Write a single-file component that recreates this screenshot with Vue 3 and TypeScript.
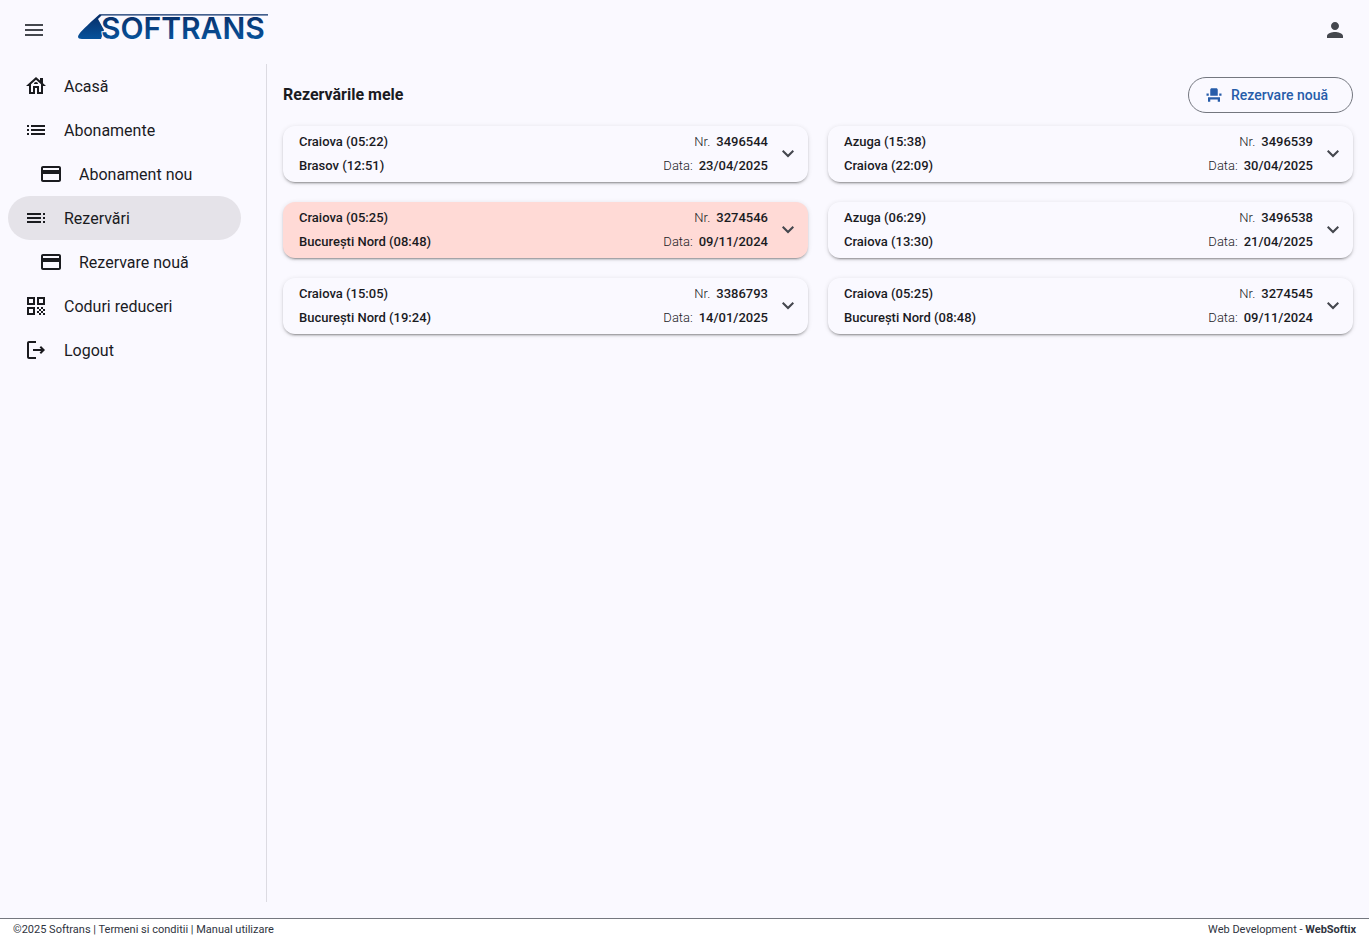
<script setup lang="ts">
interface NavItem {
  label: string
  icon: string
  nested?: boolean
  active?: boolean
}

interface Booking {
  from: string
  to: string
  number: string
  date: string
  cancelled?: boolean
}

const icons: Record<string, string> = {
  menu: 'M3 18h18v-2H3v2zm0-5h18v-2H3v2zm0-7v2h18V6H3z',
  person: 'M12 12c2.21 0 4-1.79 4-4s-1.79-4-4-4-4 1.79-4 4 1.79 4 4 4zm0 2c-2.67 0-8 1.34-8 4v2h16v-2c0-2.66-5.33-4-8-4z',
  house: 'M19 9.3V4h-3v2.6L12 3 2 12h3v8h6v-6h2v6h6v-8h3l-3-2.7zM17 18h-2v-6H9v6H7v-7.81l5-4.5 5 4.5V18zM10 10h4c0-1.1-.9-2-2-2s-2 .9-2 2z',
  list: 'M3 13h2v-2H3v2zm0 4h2v-2H3v2zm0-8h2V7H3v2zm4 4h14v-2H7v2zm0 4h14v-2H7v2zM7 7v2h14V7H7z',
  card: 'M20 4H4c-1.11 0-1.99.89-1.99 2L2 18c0 1.11.89 2 2 2h16c1.11 0 2-.89 2-2V6c0-1.11-.89-2-2-2zm0 14H4v-6h16v6zm0-10H4V6h16v2z',
  toc: 'M3 9h14V7H3v2zm0 4h14v-2H3v2zm0 4h14v-2H3v2zm16 0h2v-2h-2v2zm0-10v2h2V7h-2zm0 6h2v-2h-2v2z',
  qr: 'M3 11h8V3H3v8zm2-6h4v4H5V5zM3 21h8v-8H3v8zm2-6h4v4H5v-4zM13 3v8h8V3h-8zm6 6h-4V5h4v4zM19 19h2v2h-2zM13 13h2v2h-2zM15 15h2v2h-2zM13 17h2v2h-2zM15 19h2v2h-2zM17 17h2v2h-2zM17 13h2v2h-2zM19 15h2v2h-2z',
  logout: 'M17 8l-1.41 1.41L17.17 11H9v2h8.17l-1.58 1.58L17 16l4-4zM5 5h7V3H5c-1.1 0-2 .9-2 2v14c0 1.1.9 2 2 2h7v-2H5V5z',
  seat: 'M4 18v3h3v-3h10v3h3v-6H4v3zm15-8h3v3h-3zM2 10h3v3H2zm15 3H7V5c0-1.1.9-2 2-2h6c1.1 0 2 .9 2 2v8z',
  expand: 'M12 15.4l-6-6L7.4 8l4.6 4.6L16.6 8 18 9.4z',
}

const navItems: NavItem[] = [
  { label: 'Acasă', icon: 'house' },
  { label: 'Abonamente', icon: 'list' },
  { label: 'Abonament nou', icon: 'card', nested: true },
  { label: 'Rezervări', icon: 'toc', active: true },
  { label: 'Rezervare nouă', icon: 'card', nested: true },
  { label: 'Coduri reduceri', icon: 'qr' },
  { label: 'Logout', icon: 'logout' },
]

const bookings: Booking[] = [
  { from: 'Craiova (05:22)', to: 'Brasov (12:51)', number: '3496544', date: '23/04/2025' },
  { from: 'Azuga (15:38)', to: 'Craiova (22:09)', number: '3496539', date: '30/04/2025' },
  { from: 'Craiova (05:25)', to: 'București Nord (08:48)', number: '3274546', date: '09/11/2024', cancelled: true },
  { from: 'Azuga (06:29)', to: 'Craiova (13:30)', number: '3496538', date: '21/04/2025' },
  { from: 'Craiova (15:05)', to: 'București Nord (19:24)', number: '3386793', date: '14/01/2025' },
  { from: 'Craiova (05:25)', to: 'București Nord (08:48)', number: '3274545', date: '09/11/2024' },
]
</script>

<template>
  <div class="app">
    <header class="topbar">
      <button class="icon-button" type="button" aria-label="Meniu">
        <svg class="icon" viewBox="0 0 24 24" aria-hidden="true"><path :d="icons.menu" /></svg>
      </button>
      <a class="logo" href="#" aria-label="Softrans">
        <svg width="192" height="42" viewBox="0 -7 192 42" aria-hidden="true">
          <defs>
            <linearGradient id="logo-fill" x1="0" y1="2" x2="0" y2="26" gradientUnits="userSpaceOnUse">
              <stop offset="0" stop-color="#082e68" />
              <stop offset="1" stop-color="#07529b" />
            </linearGradient>
          </defs>
          <path fill="url(#logo-fill)" d="M22.5 1.2H191V2.4H24.5L21 6 27 17 24 26H5C1.4 26 .2 24.4 1.6 22 4 18 9 13.4 22.5 1.2z" />
          <text class="logo-text" x="24" y="26" fill="url(#logo-fill)">SOFTRANS</text>
        </svg>
      </a>
      <button class="icon-button account" type="button" aria-label="Cont">
        <svg class="icon" viewBox="0 0 24 24" aria-hidden="true"><path :d="icons.person" /></svg>
      </button>
    </header>

    <div class="body">
      <nav class="sidebar">
        <a
          v-for="item in navItems"
          :key="item.label"
          href="#"
          class="nav-item"
          :class="{ nested: item.nested, active: item.active }"
          :aria-current="item.active ? 'page' : undefined"
        >
          <svg class="icon" viewBox="0 0 24 24" aria-hidden="true"><path :d="icons[item.icon]" /></svg>
          <span class="nav-label">{{ item.label }}</span>
        </a>
      </nav>

      <main class="content">
        <div class="heading">
          <h1>Rezervările mele</h1>
          <button class="new-booking" type="button">
            <svg class="seat" viewBox="0 0 24 24" aria-hidden="true"><path :d="icons.seat" /></svg>
            <span>Rezervare nouă</span>
          </button>
        </div>
        <div class="bookings">
          <button
            v-for="booking in bookings"
            :key="booking.number"
            type="button"
            class="booking"
            :class="{ cancelled: booking.cancelled }"
            aria-expanded="false"
          >
            <span class="route">
              <span>{{ booking.from }}</span>
              <span>{{ booking.to }}</span>
            </span>
            <span class="details">
              <span class="detail"><span class="key">Nr.</span><span>{{ booking.number }}</span></span>
              <span class="detail"><span class="key">Data:</span><span>{{ booking.date }}</span></span>
            </span>
            <svg class="icon" viewBox="0 0 24 24" aria-hidden="true"><path :d="icons.expand" /></svg>
          </button>
        </div>
      </main>
    </div>

    <footer class="footer">
      <span>©2025 Softrans | <a href="#">Termeni si conditii</a> | <a href="#">Manual utilizare</a></span>
      <span>Web Development - <a class="vendor" href="#">WebSoftix</a></span>
    </footer>
  </div>
</template>

<style>
body {
  margin: 0;
  background: #faf9ff;
}
</style>

<style scoped>
.app {
  display: flex;
  flex-direction: column;
  min-height: 100vh;
  color: #1a1b1f;
  font-family: Roboto, "Liberation Sans", sans-serif;
}

a {
  color: inherit;
  text-decoration: none;
}

button {
  font: inherit;
  color: inherit;
  cursor: pointer;
}

.icon {
  display: block;
  flex: none;
  width: 24px;
  height: 24px;
  fill: currentColor;
}

.topbar {
  display: flex;
  align-items: center;
  height: 60px;
  padding: 0 14px;
}

.icon-button {
  display: grid;
  place-items: center;
  width: 40px;
  height: 40px;
  padding: 0;
  border: 0;
  border-radius: 50%;
  background: none;
  color: #44474e;
}

.account {
  margin-left: auto;
}

.logo {
  margin: 0 0 6px 23px;
}

.logo svg {
  display: block;
}

.logo-text {
  font-family: Inter, "Liberation Sans", sans-serif;
  font-size: 30px;
  font-weight: 600;
  stroke: #faf9ff;
  stroke-width: 2px;
  paint-order: stroke;
}

.body {
  display: flex;
  flex: 1;
  padding: 4px 0 16px;
}

.sidebar {
  box-sizing: border-box;
  flex: none;
  width: 267px;
  padding: 0 25px 0 8px;
  border-right: 1px solid #dcdbe2;
}

.nav-item {
  display: flex;
  align-items: center;
  gap: 16px;
  height: 44px;
  padding: 0 16px;
  border-radius: 22px;
  font-size: 16px;
  line-height: 24px;
}

.nav-label {
  padding-top: 2px;
}

.nested {
  padding-left: 31px;
}

.active {
  background: #e5e3e9;
}

.content {
  flex: 1;
  min-width: 0;
  padding: 13px 16px;
}

.heading {
  display: flex;
  align-items: center;
  justify-content: space-between;
  margin-bottom: 13px;
}

h1 {
  margin: 0;
  font-size: 16px;
  line-height: 24px;
  font-weight: 700;
}

.new-booking {
  display: flex;
  align-items: center;
  gap: 8px;
  height: 36px;
  padding: 0 24px 0 16px;
  border: 1px solid #74777f;
  border-radius: 18px;
  background: none;
  color: #265ca9;
  font-size: 14px;
  line-height: 20px;
  font-weight: 500;
}

.seat {
  width: 18px;
  height: 18px;
  fill: currentColor;
}

.bookings {
  display: grid;
  grid-template-columns: 1fr 1fr;
  gap: 20px;
}

.booking {
  display: flex;
  align-items: center;
  gap: 8px;
  padding: 4px 8px 4px 16px;
  border: 0;
  border-radius: 12px;
  background: #faf9ff;
  box-shadow:
    0 3px 1px -2px rgba(0, 0, 0, 0.2),
    0 2px 2px 0 rgba(0, 0, 0, 0.14),
    0 1px 5px 0 rgba(0, 0, 0, 0.12);
  font-size: 13px;
  line-height: 24px;
  font-weight: 500;
  text-align: left;
}

.cancelled {
  background: #ffdad6;
}

.booking .icon {
  color: #44474e;
}

.route,
.details {
  display: flex;
  flex-direction: column;
}

.route {
  flex: 1;
}

.detail {
  display: flex;
  justify-content: flex-end;
  gap: 6px;
}

.key {
  font-weight: 300;
}

.footer {
  display: flex;
  justify-content: space-between;
  padding: 2px 13px 0;
  border-top: 1px solid #74777f;
  background: #fff;
  color: #2f3440;
  font-size: 11px;
  line-height: 18px;
}

.vendor {
  font-weight: 700;
}
</style>
